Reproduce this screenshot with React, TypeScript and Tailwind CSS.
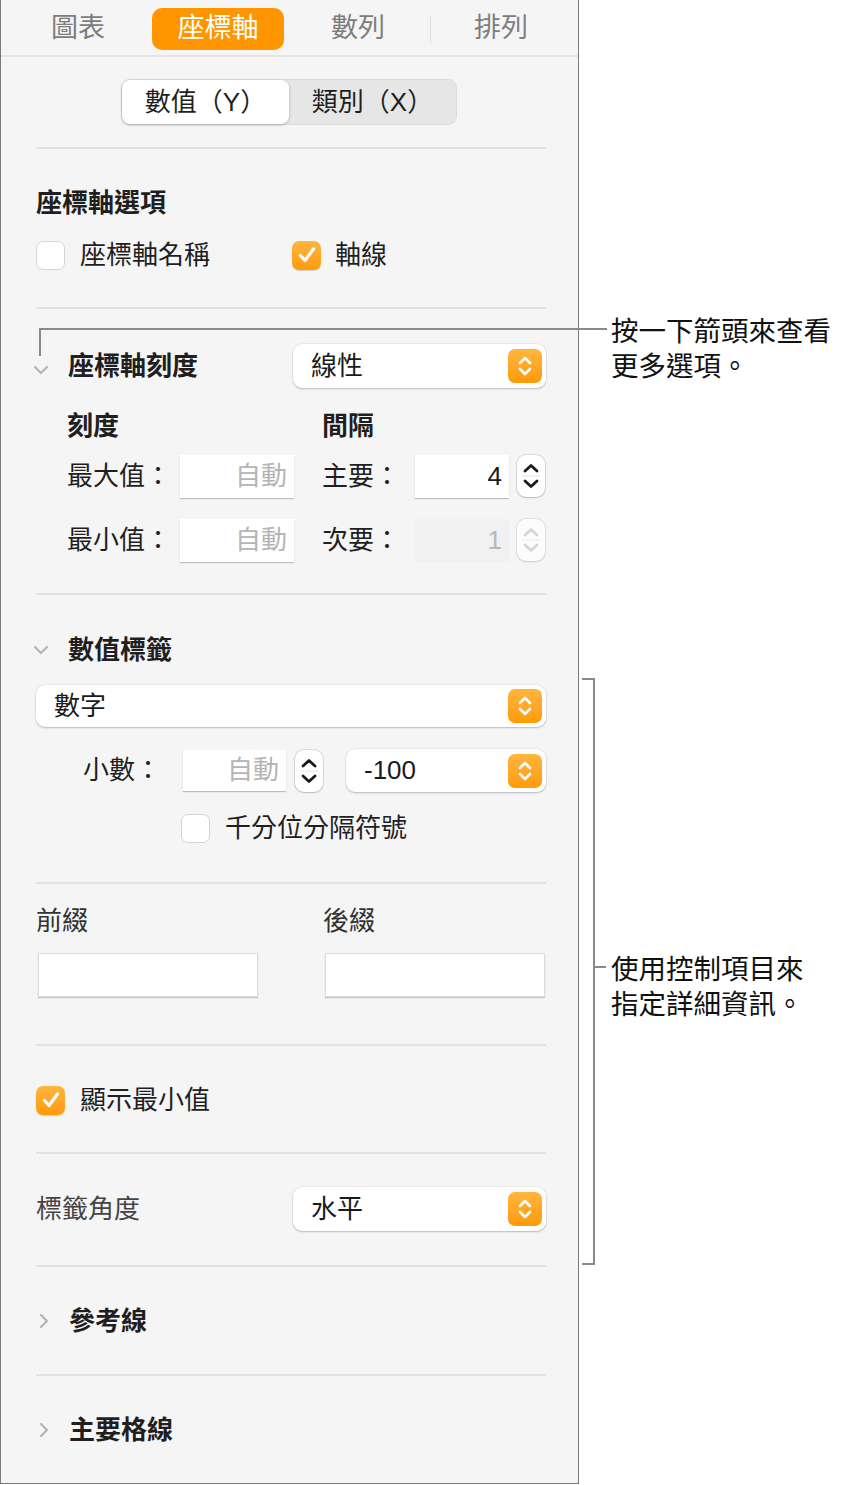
import React from "react";

const FONT = "font-['Liberation_Sans','Noto_Sans_CJK_TC',sans-serif]";

function Divider() {
  return <div className="h-[2px] bg-[#e2e2e2]" />;
}

function UpDown() {
  return (
    <svg width="18" height="26" viewBox="0 0 18 26" fill="none">
      <path d="M4 10 L9 5 L14 10" stroke="white" strokeWidth="2.6" strokeLinecap="round" strokeLinejoin="round" />
      <path d="M4 16 L9 21 L14 16" stroke="white" strokeWidth="2.6" strokeLinecap="round" strokeLinejoin="round" />
    </svg>
  );
}

function Popup({ label, className = "" }: { label: string; className?: string }) {
  return (
    <div
      className={`flex items-center justify-between rounded-[9px] bg-white pl-[18px] pr-[4px] shadow-[0_1px_2px_rgba(0,0,0,0.22),0_0_0_0.5px_rgba(0,0,0,0.08)] ${className}`}
    >
      <span className="text-[26px] text-[#1a1a1a]">{label}</span>
      <div className="flex h-[34px] w-[34px] items-center justify-center rounded-[7px] bg-gradient-to-b from-[#ffb53d] to-[#ff9a00]">
        <UpDown />
      </div>
    </div>
  );
}

function Stepper({ disabled = false }: { disabled?: boolean }) {
  const c = disabled ? "#c8c8c8" : "#1a1a1a";
  return (
    <div
      className={`flex h-[42px] w-[28px] flex-col items-center justify-center rounded-[9px] bg-white shadow-[0_0_0_1px_rgba(0,0,0,0.1),0_1px_2px_rgba(0,0,0,0.15)] ${
        disabled ? "opacity-70" : ""
      }`}
    >
      <svg width="18" height="40" viewBox="0 0 18 40" fill="none">
        <path d="M3 15 L9 9.5 L15 15" stroke={c} strokeWidth="2.8" strokeLinecap="round" strokeLinejoin="round" />
        <line x1="0" y1="20" x2="18" y2="20" stroke="#e4e4e4" strokeWidth="1" />
        <path d="M3 25 L9 30.5 L15 25" stroke={c} strokeWidth="2.8" strokeLinecap="round" strokeLinejoin="round" />
      </svg>
    </div>
  );
}

function Field({ value, muted = false, disabled = false, className = "" }: { value?: string; muted?: boolean; disabled?: boolean; className?: string }) {
  return (
    <div
      className={`flex items-center justify-end pr-[7px] text-[26px] ${
        disabled ? "bg-[#f1f1f1] text-[#b8b8b8]" : "bg-white shadow-[0_1px_1px_rgba(0,0,0,0.22)]"
      } ${muted ? "text-[#b4b4b4]" : "text-[#1a1a1a]"} ${className}`}
    >
      {value}
    </div>
  );
}

function Checkbox({ checked = false }: { checked?: boolean }) {
  if (checked) {
    return (
      <div className="flex h-[29px] w-[29px] items-center justify-center rounded-[7px] bg-gradient-to-b from-[#ffb53d] to-[#ff9a00] shadow-[0_1px_1px_rgba(0,0,0,0.15)]">
        <svg width="22" height="22" viewBox="0 0 22 22" fill="none">
          <path d="M4.5 11.5 L9 16.5 L17.5 5" stroke="white" strokeWidth="3.2" strokeLinecap="round" strokeLinejoin="round" />
        </svg>
      </div>
    );
  }
  return <div className="h-[29px] w-[29px] rounded-[7px] border border-[#d4d4d4] bg-white" />;
}

function Chevron({ dir }: { dir: "down" | "right" }) {
  return (
    <svg width="16" height="16" viewBox="0 0 16 16" fill="none">
      {dir === "down" ? (
        <path d="M2 5 L8 11 L14 5" stroke="#b5b5b5" strokeWidth="2.2" strokeLinecap="round" strokeLinejoin="round" />
      ) : (
        <path d="M5 2 L11 8 L5 14" stroke="#b5b5b5" strokeWidth="2.2" strokeLinecap="round" strokeLinejoin="round" />
      )}
    </svg>
  );
}

export default function App() {
  return (
    <div className={`relative flex h-[1485px] w-[854px] bg-white ${FONT}`}>
      {/* Inspector panel */}
      <div className="h-[1484px] w-[579px] border-x-[1.5px] border-b-[1.5px] border-[#7a7a7a] bg-[#f5f5f5] text-[#1f1f1f]">
        {/* Tabs */}
        <div className="flex h-[57px] items-center border-b-2 border-[#e4e4e4] pt-[2px] text-[27px]">
          <div className="ml-[19px] w-[116px] text-center text-[#7d7d7d]">圖表</div>
          <div className="ml-[16px] flex h-[42px] w-[132px] items-center justify-center rounded-[10px] bg-[#ff9500] text-white">座標軸</div>
          <div className="ml-[16px] w-[116px] text-center text-[#7d7d7d]">數列</div>
          <div className="ml-[14px] h-[28px] w-px bg-[#e0e0e0]" />
          <div className="ml-[12px] w-[116px] text-center text-[#7d7d7d]">排列</div>
        </div>

        <div className="pl-[35px] pr-[32px]">
          {/* Segmented */}
          <div className="mt-[22px] flex justify-center pr-[4px]">
            <div className="flex h-[46px] w-[336px] rounded-[9px] bg-[#e6e6e6] p-[1px] shadow-[inset_0_0_0_1px_rgba(0,0,0,0.05)]">
              <div className="flex flex-1 items-center justify-center rounded-[8px] bg-white text-[26px] shadow-[0_1px_3px_rgba(0,0,0,0.25)]">數值（Y）</div>
              <div className="flex flex-1 items-center justify-center text-[26px]">類別（X）</div>
            </div>
          </div>

          <div className="mt-[22px]"><Divider /></div>

          {/* 座標軸選項 */}
          <div className="mt-[38px] flex h-[32px] items-center text-[26px] font-bold">座標軸選項</div>
          <div className="mt-[20px] flex h-[32px] items-center text-[26px]">
            <Checkbox />
            <span className="ml-[15px] w-[212px]">座標軸名稱</span>
            <Checkbox checked />
            <span className="ml-[14px]">軸線</span>
          </div>
          <div className="mt-[36px]"><Divider /></div>

          {/* 座標軸刻度 */}
          <div className="mt-[35px] flex h-[44px] items-center">
            <div className="-ml-[3px] w-[35px] pt-[8px]"><Chevron dir="down" /></div>
            <span className="w-[225px] text-[26px] font-bold">座標軸刻度</span>
            <Popup label="線性" className="h-[44px] flex-1" />
          </div>
          <div className="mt-[22px] flex h-[32px] items-center pl-[31px] text-[26px] font-bold">
            <span className="w-[255px]">刻度</span>
            <span>間隔</span>
          </div>
          <div className="mt-[12px] flex h-[44px] items-center pl-[31px] text-[26px]">
            <span className="w-[113px]">最大值：</span>
            <Field value="自動" muted className="h-[43px] w-[114px]" />
            <span className="ml-[28px] w-[93px]">主要：</span>
            <Field value="4" className="h-[43px] w-[94px]" />
            <div className="ml-[8px]"><Stepper /></div>
          </div>
          <div className="mt-[20px] flex h-[44px] items-center pl-[31px] text-[26px]">
            <span className="w-[113px]">最小值：</span>
            <Field value="自動" muted className="h-[43px] w-[114px]" />
            <span className="ml-[28px] w-[93px]">次要：</span>
            <Field value="1" disabled className="h-[43px] w-[94px]" />
            <div className="ml-[8px]"><Stepper disabled /></div>
          </div>
          <div className="mt-[31px]"><Divider /></div>

          {/* 數值標籤 */}
          <div className="mt-[39px] flex h-[32px] items-center">
            <div className="-ml-[3px] w-[35px]"><Chevron dir="down" /></div>
            <span className="text-[26px] font-bold">數值標籤</span>
          </div>
          <Popup label="數字" className="mt-[19px] h-[42px]" />
          <div className="mt-[22px] flex h-[43px] items-center pl-[47px] text-[26px]">
            <span className="w-[100px]">小數：</span>
            <Field value="自動" muted className="h-[41px] w-[103px]" />
            <div className="ml-[9px]"><Stepper /></div>
            <Popup label="-100" className="ml-[23px] h-[43px] flex-1" />
          </div>
          <div className="mt-[21px] flex h-[30px] items-center pl-[145px] text-[26px]">
            <Checkbox />
            <span className="ml-[15px]">千分位分隔符號</span>
          </div>
          <div className="mt-[39px]"><Divider /></div>

          {/* 前綴 / 後綴 */}
          <div className="mt-[21px] flex h-[32px] items-center text-[26px] text-[#333]">
            <span className="w-[287px]">前綴</span>
            <span>後綴</span>
          </div>
          <div className="mt-[16px] flex h-[44px] items-stretch">
            <div className="ml-[2px] w-[220px] border border-[#dcdcdc] bg-white shadow-[0_1px_1px_rgba(0,0,0,0.2)]" />
            <div className="ml-[67px] w-[220px] border border-[#dcdcdc] bg-white shadow-[0_1px_1px_rgba(0,0,0,0.2)]" />
          </div>
          <div className="mt-[47px]"><Divider /></div>

          {/* 顯示最小值 */}
          <div className="mt-[39px] flex h-[30px] items-center text-[26px]">
            <Checkbox checked />
            <span className="ml-[15px]">顯示最小值</span>
          </div>
          <div className="mt-[37px]"><Divider /></div>

          {/* 標籤角度 */}
          <div className="mt-[33px] flex h-[44px] items-center">
            <span className="w-[257px] text-[26px] text-[#444]">標籤角度</span>
            <Popup label="水平" className="h-[44px] flex-1" />
          </div>
          <div className="mt-[34px]"><Divider /></div>

          {/* 參考線 */}
          <div className="mt-[38px] flex h-[32px] items-center">
            <div className="w-[33px]"><Chevron dir="right" /></div>
            <span className="text-[26px] font-bold">參考線</span>
          </div>
          <div className="mt-[37px]"><Divider /></div>

          {/* 主要格線 */}
          <div className="mt-[38px] flex h-[32px] items-center">
            <div className="w-[33px]"><Chevron dir="right" /></div>
            <span className="text-[26px] font-bold">主要格線</span>
          </div>
        </div>
      </div>

      {/* Callout: arrow */}
      <div className="absolute left-[39px] top-[328px] h-[2px] w-[568px] bg-[#8a8a8a]" />
      <div className="absolute left-[39px] top-[328px] h-[28px] w-[2px] bg-[#8a8a8a]" />
      <div className="absolute left-[611px] top-[312px] text-[27.5px] text-[#111] font-['Noto_Sans_CJK_TC',sans-serif]">
        <div className="h-[35px] leading-[34px]">按一下箭頭來查看</div>
        <div className="h-[35px] leading-[34px]">更多選項。</div>
      </div>

      {/* Callout: bracket */}
      <div className="absolute left-[582px] top-[678px] h-[587px] w-[13px] border-y-2 border-r-2 border-[#8a8a8a]" />
      <div className="absolute left-[594px] top-[966px] h-[2px] w-[12px] bg-[#8a8a8a]" />
      <div className="absolute left-[611px] top-[950px] text-[27.5px] text-[#111] font-['Noto_Sans_CJK_TC',sans-serif]">
        <div className="h-[35px] leading-[34px]">使用控制項目來</div>
        <div className="h-[35px] leading-[34px]">指定詳細資訊。</div>
      </div>
    </div>
  );
}
